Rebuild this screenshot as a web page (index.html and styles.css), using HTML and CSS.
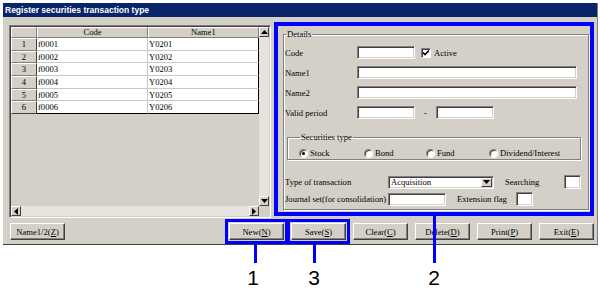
FILE: index.html
```html
<!DOCTYPE html>
<html lang="en">

<head>
    <meta charset="UTF-8">
    <title>Register securities transaction type</title>
    <link rel="stylesheet" href="styles.css">
</head>

<body>
    <div class="window">
        <div class="title-bar">Register securities transaction type</div>
        <div class="window-body">
            <div class="grid-box">
                <div class="grid-main">
                    <div class="grid-table">
                        <div class="cell corner"></div>
                        <div class="cell head">Code</div>
                        <div class="cell head">Name1</div>

                        <div class="cell num">1</div><div class="cell data">f0001</div><div class="cell data last-col">Y0201</div>
                        <div class="cell num">2</div><div class="cell data">f0002</div><div class="cell data last-col">Y0202</div>
                        <div class="cell num">3</div><div class="cell data">f0003</div><div class="cell data last-col">Y0203</div>
                        <div class="cell num">4</div><div class="cell data">f0004</div><div class="cell data last-col">Y0204</div>
                        <div class="cell num">5</div><div class="cell data">f0005</div><div class="cell data last-col">Y0205</div>
                        <div class="cell num last-row">6</div><div class="cell data last-row">f0006</div><div class="cell data last-col last-row">Y0206</div>
                    </div>
                    <div class="vscroll">
                        <div class="sb-btn">
                            <svg width="7" height="4" viewBox="0 0 7 4"><path d="M3.5 0 L7 4 L0 4 Z" fill="#000"/></svg>
                        </div>
                        <div class="sb-track"></div>
                        <div class="sb-btn">
                            <svg width="7" height="4" viewBox="0 0 7 4"><path d="M0 0 L7 0 L3.5 4 Z" fill="#000"/></svg>
                        </div>
                    </div>
                </div>
                <div class="hscroll">
                    <div class="sb-btn">
                        <svg width="4" height="7" viewBox="0 0 4 7"><path d="M4 0 L4 7 L0 3.5 Z" fill="#000"/></svg>
                    </div>
                    <div class="sb-track"></div>
                    <div class="sb-btn">
                        <svg width="4" height="7" viewBox="0 0 4 7"><path d="M0 0 L4 3.5 L0 7 Z" fill="#000"/></svg>
                    </div>
                    <div class="sb-corner"></div>
                </div>
            </div>

            <div class="details-frame">
                <fieldset class="group details">
                    <legend>Details</legend>
                    <div class="form-row">
                        <span class="label">Code</span>
                        <span class="input short"></span>
                        <span class="checkbox">
                            <svg width="8" height="8" viewBox="0 0 8 8"><path d="M1 3.5 L3 5.5 L7 1.5" fill="none" stroke="#000" stroke-width="1.6"/></svg>
                        </span>
                        <span class="check-label">Active</span>
                    </div>
                    <div class="form-row">
                        <span class="label">Name1</span>
                        <span class="input long"></span>
                    </div>
                    <div class="form-row">
                        <span class="label">Name2</span>
                        <span class="input long"></span>
                    </div>
                    <div class="form-row">
                        <span class="label">Valid period</span>
                        <span class="input short"></span>
                        <span class="dash">-</span>
                        <span class="input short"></span>
                    </div>

                    <fieldset class="group sec-type">
                        <legend>Securities type</legend>
                        <div class="radios">
                            <span class="radio-item"><span class="radio on"></span>Stock</span>
                            <span class="radio-item"><span class="radio"></span>Bond</span>
                            <span class="radio-item"><span class="radio"></span>Fund</span>
                            <span class="radio-item"><span class="radio"></span>Dividend/Interest</span>
                        </div>
                    </fieldset>

                    <div class="trans-row first">
                        <span class="label wide">Type of transaction</span>
                        <span class="input select">
                            <span class="select-text">Acquisition</span>
                            <span class="drop-btn">
                                <svg width="7" height="4" viewBox="0 0 7 4"><path d="M0 0 L7 0 L3.5 4 Z" fill="#000"/></svg>
                            </span>
                        </span>
                        <span class="side-label">Searching</span>
                        <span class="input flag"></span>
                    </div>
                    <div class="trans-row">
                        <span class="label wide">Journal set(for consolidation)</span>
                        <span class="input short"></span>
                        <span class="side-label">Extension flag</span>
                        <span class="input flag"></span>
                    </div>
                </fieldset>
            </div>
        </div>

        <div class="button-row">
            <button class="btn">Name1/2(<u>Z</u>)</button>
            <div class="btn-group">
                <button class="btn marked">New(<u>N</u>)</button>
                <button class="btn marked">Save(<u>S</u>)</button>
                <button class="btn">Clear(<u>C</u>)</button>
                <button class="btn">Delete(<u>D</u>)</button>
                <button class="btn">Print(<u>P</u>)</button>
                <button class="btn">Exit(<u>E</u>)</button>
            </div>
        </div>
    </div>

    <!-- callout marks -->
    <div class="callout-line line-1"></div>
    <div class="callout-line line-3"></div>
    <div class="callout-line line-2"></div>
    <span class="callout-num num-1">1</span>
    <span class="callout-num num-3">3</span>
    <span class="callout-num num-2">2</span>
</body>

</html>
```

FILE: styles.css
```css
body {
    margin: 0;
    background: #fff;
    font-family: "Liberation Serif", serif;
    font-size: 8.6px;
    color: #000;
    position: relative;
    width: 600px;
    height: 295px;
    overflow: hidden;
}

.window {
    margin: 3px 0 0 3px;
    width: 595px;
    box-sizing: border-box;
    background: #d4d0c8;
    border-right: 1px solid #808080;
    border-bottom: 1px solid #404040;
    padding-bottom: 4px;
}

.title-bar {
    height: 14px;
    line-height: 14px;
    padding-left: 2px;
    background: #0a246a;
    color: #fff;
    font-family: "Liberation Sans", sans-serif;
    font-weight: bold;
    font-size: 8.5px;
}

.window-body {
    display: flex;
    align-items: flex-start;
    padding: 8px 0 0 6px;
    height: 193px;
}

/* grid */
.grid-box {
    width: 262px;
    height: 193px;
    box-sizing: border-box;
    border: 1px solid;
    border-color: #808080 #fff #fff #808080;
    box-shadow: inset 1px 1px 0 #404040, inset -1px -1px 0 #d4d0c8;
    padding: 1px;
    display: flex;
    flex-direction: column;
}

.grid-main {
    display: flex;
    flex: 1;
}

.grid-table {
    width: 248px;
    display: grid;
    grid-template-columns: 26px 111px 111px;
    grid-template-rows: 11px repeat(6, 12.67px);
    align-content: start;
}

.cell {
    box-sizing: border-box;
    line-height: 11px;
    white-space: nowrap;
    overflow: hidden;
}

.corner,
.head,
.num {
    background: #d4d0c8;
    border-top: 1px solid #fff;
    border-left: 1px solid #fff;
    border-right: 1px solid #808080;
    border-bottom: 1px solid #808080;
    text-align: center;
}

.head {
    line-height: 9px;
}

.num {
    border-right-color: #404040;
    line-height: 11px;
}

.data {
    background: #fff;
    border-right: 1px solid #c8c8c8;
    border-bottom: 1px solid #c8c8c8;
    padding-left: 1px;
    line-height: 12px;
}

.data.last-col {
    border-right-color: #000;
}

.data.last-row {
    border-bottom-color: #000;
}

.num.last-row {
    border-bottom-color: #404040;
}

.vscroll {
    width: 10px;
    display: flex;
    flex-direction: column;
}

.hscroll {
    height: 10px;
    display: flex;
}

.sb-btn {
    width: 10px;
    height: 10px;
    box-sizing: border-box;
    background: #d4d0c8;
    border-top: 1px solid #fff;
    border-left: 1px solid #fff;
    border-right: 1px solid #404040;
    border-bottom: 1px solid #404040;
    display: flex;
    align-items: center;
    justify-content: center;
}

.sb-track {
    flex: 1;
    background: #e6e3de;
}

.sb-corner {
    width: 10px;
    background: #d4d0c8;
}

/* details */
.details-frame {
    width: 320px;
    height: 194px;
    box-sizing: border-box;
    margin: -3px 0 0 3px;
    border: 4px solid #0000ff;
    padding: 3px 0 0 5px;
}

.group {
    margin: 0;
    padding: 0;
    border: 1px solid #808080;
    box-shadow: 1px 1px 0 #fff, inset 1px 1px 0 #fff;
    min-width: 0;
}

.group legend {
    padding: 0 1px;
    margin-left: 1px;
    line-height: 10px;
}

.details {
    width: 306px;
    height: 181px;
    box-sizing: border-box;
    padding: 7px 0 0 1px;
}

.form-row {
    display: flex;
    align-items: center;
    height: 13px;
    margin-bottom: 7px;
}

.label {
    width: 72px;
    flex: none;
}

.label.wide {
    width: 103px;
}

.input {
    display: block;
    height: 13px;
    box-sizing: border-box;
    background: #fff;
    border: 1px solid;
    border-color: #808080 #fff #fff #808080;
    box-shadow: inset 1px 1px 0 #404040, inset -1px -1px 0 #d4d0c8;
    flex: none;
}

.input.short {
    width: 58px;
}

.input.long {
    width: 220px;
}

.checkbox {
    width: 10px;
    height: 10px;
    box-sizing: border-box;
    margin-left: 6px;
    background: #fff;
    border: 1px solid;
    border-color: #808080 #fff #fff #808080;
    box-shadow: inset 1px 1px 0 #404040;
    display: flex;
    align-items: center;
    justify-content: center;
}

.check-label {
    margin-left: 3px;
}

.dash {
    width: 21px;
    text-align: center;
}

.sec-type {
    width: 294px;
    height: 28px;
    box-sizing: border-box;
    margin: 13px 0 0 2px;
    padding: 6px 0 0 11px;
}

.radios {
    display: grid;
    grid-template-columns: 65px 62px 63px auto;
    height: 10px;
    line-height: 10px;
}

.radio-item {
    display: flex;
    align-items: center;
}

.radio {
    width: 9px;
    height: 9px;
    box-sizing: border-box;
    margin-right: 2px;
    border-radius: 50%;
    background: #fff;
    border: 1px solid;
    border-color: #808080 #fff #fff #808080;
    box-shadow: inset 1px 1px 0 #404040;
    position: relative;
}

.radio.on::after {
    content: "";
    position: absolute;
    left: 2px;
    top: 2px;
    width: 3px;
    height: 3px;
    border-radius: 50%;
    background: #000;
}

.trans-row {
    display: flex;
    align-items: center;
    height: 14px;
    margin-top: 3px;
}

.trans-row.first {
    margin-top: 15px;
}

.select {
    width: 106px;
    display: flex;
    align-items: center;
    justify-content: space-between;
    padding: 0 1px 0 2px;
}

.select-text {
    line-height: 10px;
}

.drop-btn {
    width: 11px;
    height: 9px;
    box-sizing: border-box;
    background: #d4d0c8;
    border-top: 1px solid #fff;
    border-left: 1px solid #fff;
    border-right: 1px solid #404040;
    border-bottom: 1px solid #404040;
    display: flex;
    align-items: center;
    justify-content: center;
}

.side-label {
    margin-left: 11px;
    width: 59px;
}

.input.flag {
    width: 17px;
    height: 14px;
}

/* buttons */
.button-row {
    display: flex;
    justify-content: space-between;
    margin-top: 5px;
    padding: 0 3px 0 7px;
    height: 17px;
}

.btn-group {
    display: flex;
    gap: 7px;
}

.btn {
    width: 55px;
    height: 17px;
    margin: 0;
    padding: 0;
    background: #d4d0c8;
    font-family: "Liberation Serif", serif;
    font-size: 8.6px;
    color: #000;
    border: 1px solid;
    border-color: #fff #404040 #404040 #fff;
    box-shadow: inset -1px -1px 0 #808080;
}

.btn.marked {
    outline: 3px solid #0000ff;
    outline-offset: 1px;
}

/* callouts */
.callout-line {
    position: absolute;
    width: 3px;
    background: #0000ff;
}

.line-1 {
    left: 254px;
    top: 244px;
    height: 19px;
}

.line-3 {
    left: 313px;
    top: 244px;
    height: 19px;
}

.line-2 {
    left: 433px;
    top: 216px;
    height: 47px;
}

.callout-num {
    position: absolute;
    top: 267px;
    width: 20px;
    text-align: center;
    font-family: "Liberation Sans", sans-serif;
    font-size: 21px;
    line-height: 21px;
}

.num-1 {
    left: 243px;
}

.num-3 {
    left: 304px;
}

.num-2 {
    left: 424px;
}
```
